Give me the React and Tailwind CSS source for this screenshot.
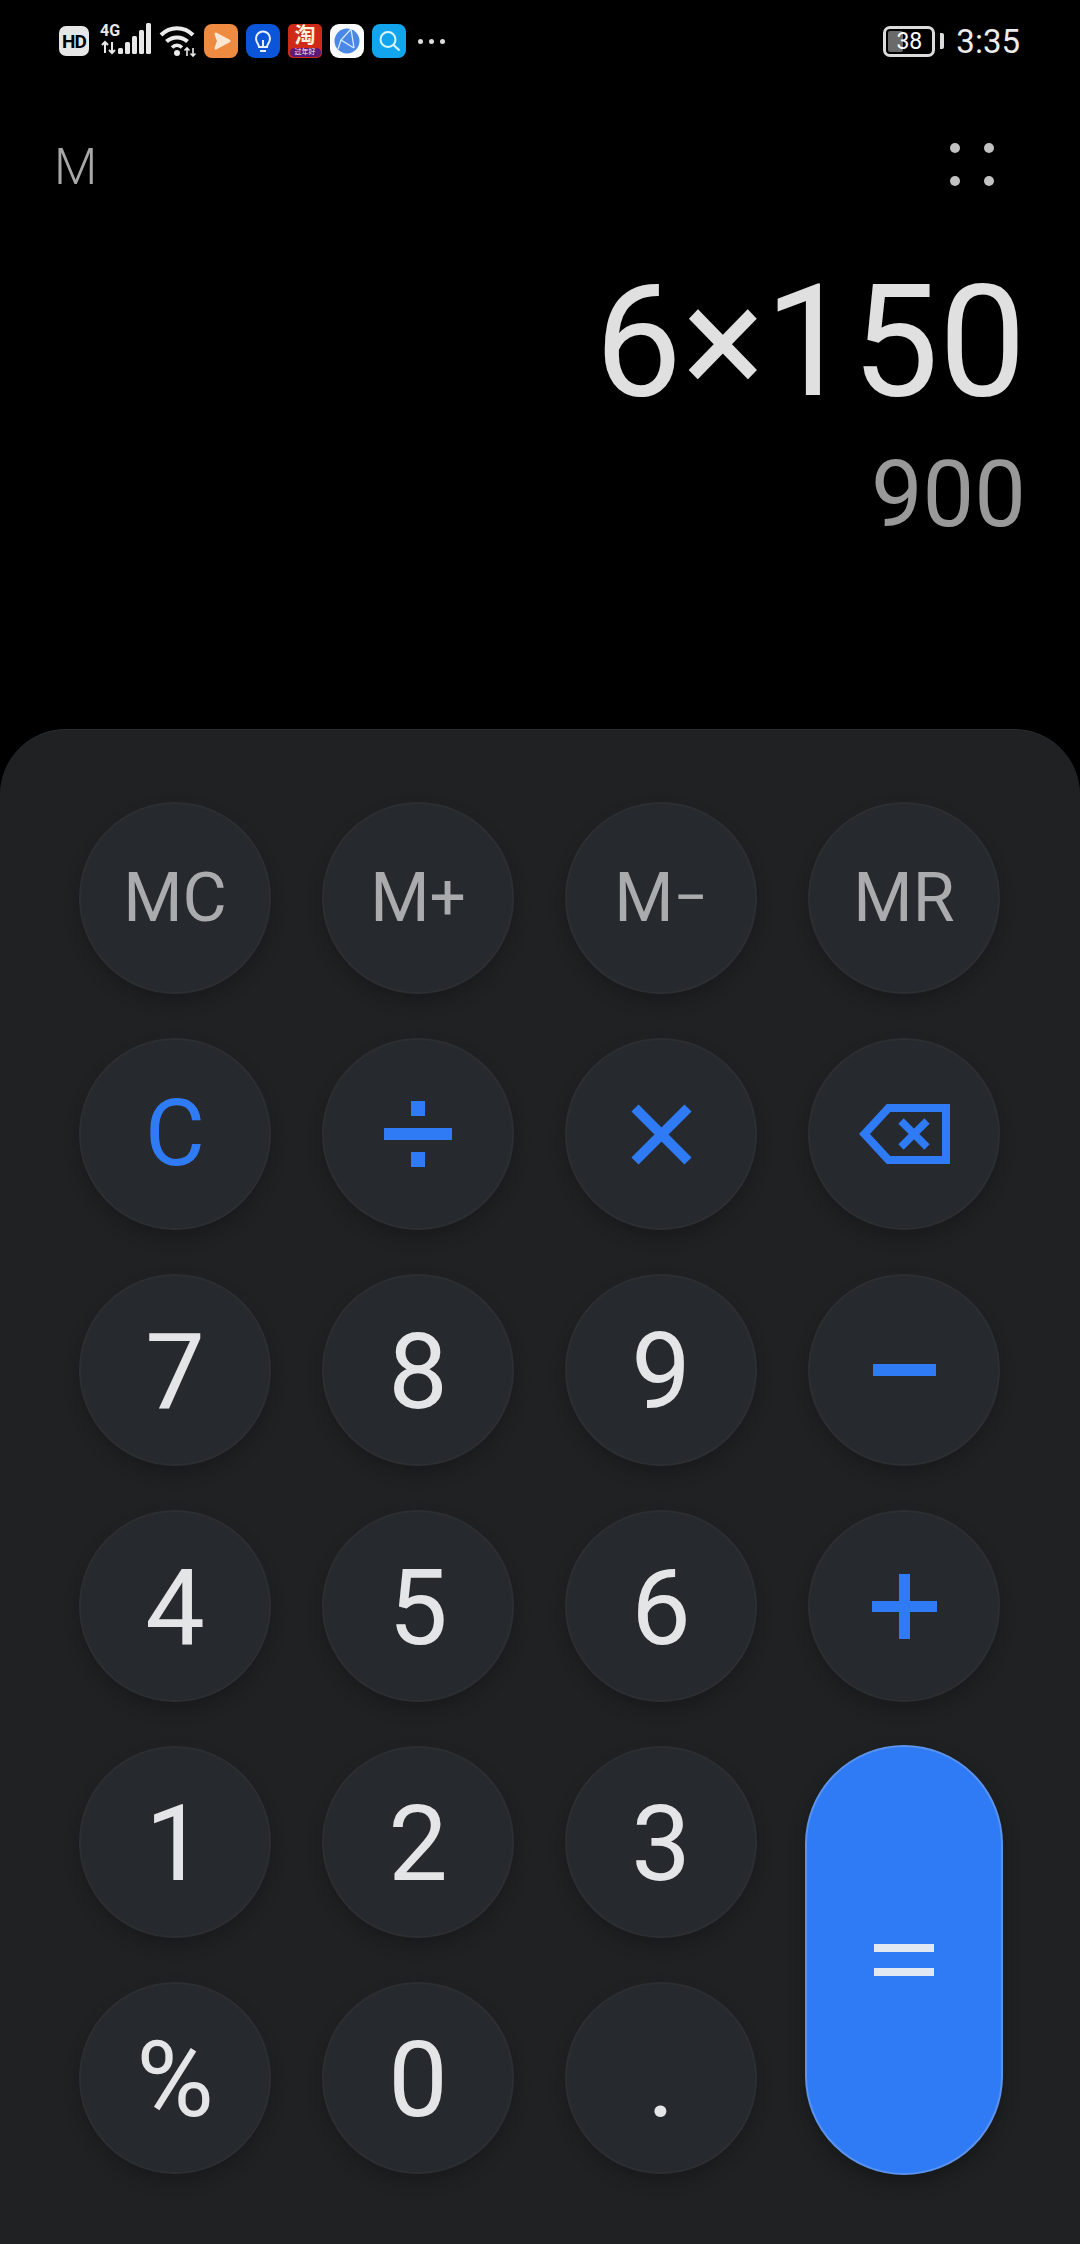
import React from 'react';

const font = { fontFamily: 'Roboto, "Noto Sans CJK SC", sans-serif' };

function HdBadge() {
  return (
    <div className="flex h-[30px] w-[30px] items-center justify-center rounded-[7px] bg-[#e6e6e6] text-[19px] font-bold leading-none tracking-[-1px] text-black">
      HD
    </div>
  );
}

function Signal() {
  return (
    <div className="-mt-[4px] ml-[11px] flex h-[34px] w-[52px] flex-col overflow-visible">
      <span className="h-[17px] w-[18px] text-[16px] font-bold leading-[17px] text-[#e8e8e8]">4G</span>
      <svg width="52" height="34" viewBox="0 0 52 34" className="-mt-[17px]">
        <path d="M5 31V20M2 23l3-3 3 3" stroke="#e8e8e8" strokeWidth="2" fill="none" />
        <path d="M12 20v11M9 28l3 3 3-3" stroke="#e8e8e8" strokeWidth="2" fill="none" />
        <rect x="18" y="26" width="5" height="6" rx="1.5" fill="#e8e8e8" />
        <rect x="25" y="20" width="5" height="12" rx="1.5" fill="#e8e8e8" />
        <rect x="32" y="14" width="5" height="18" rx="1.5" fill="#e8e8e8" />
        <rect x="39" y="8" width="5" height="24" rx="1.5" fill="#e8e8e8" />
        <rect x="46" y="1" width="5" height="31" rx="1.5" fill="#e8e8e8" />
      </svg>
    </div>
  );
}

function Wifi() {
  return (
    <svg width="38" height="34" viewBox="0 0 38 34" className="-mt-[3px] ml-[7px]">
      <path d="M2 12C11 3 25 3 34 12" stroke="#ececec" strokeWidth="4" fill="none" />
      <path d="M7.5 18.5C13 13 23 13 28.5 18.5" stroke="#ececec" strokeWidth="4" fill="none" />
      <path d="M13 24.5C16 21.5 20 21.5 23 24.5" stroke="#ececec" strokeWidth="3.5" fill="none" />
      <circle cx="18" cy="30" r="3" fill="#ececec" />
      <path d="M28 33V25M25.5 27.5L28 25l2.5 2.5" stroke="#ececec" strokeWidth="1.6" fill="none" />
      <path d="M34 25v8M31.5 30.5L34 33l2.5-2.5" stroke="#ececec" strokeWidth="1.6" fill="none" />
    </svg>
  );
}

function VideoApp() {
  return (
    <svg width="34" height="34" viewBox="0 0 34 34">
      <rect width="34" height="34" rx="8" fill="#ef8b40" />
      <path d="M12 10l13 7-13 7 2.500-7z" fill="#fbe6d2" stroke="#fbe6d2" strokeWidth="3" strokeLinejoin="round" />
    </svg>
  );
}

function BulbApp() {
  return (
    <svg width="34" height="34" viewBox="0 0 34 34">
      <rect width="34" height="34" rx="9" fill="#0b55d8" />
      <path d="M13 23c0-3-3-4.500-3-8.500a7 7 0 0114 0c0 4-3 5.500-3 8.500z" stroke="#e8f0ff" strokeWidth="2" fill="none" />
      <path d="M14 27h6M17 23v-7" stroke="#e8f0ff" strokeWidth="2" fill="none" />
    </svg>
  );
}

function TaobaoApp() {
  return (
    <div className="flex h-[34px] w-[34px] flex-col items-center overflow-hidden rounded-[5px] bg-[#cf2a18]">
      <div className="h-[23px] text-[21px] font-bold leading-[23px] text-[#fff1d8]">淘</div>
      <div className="mt-[1px] h-[9px] w-[31px] rounded-full bg-[#5c1a78] text-center text-[7px] leading-[9px] text-[#ffe8e8]">过年好</div>
    </div>
  );
}

function GlobeApp() {
  return (
    <svg width="34" height="34" viewBox="0 0 34 34">
      <rect width="34" height="34" rx="9" fill="#fbfbfd" />
      <circle cx="17" cy="17" r="12.500" fill="#4a88e6" />
      <path d="M21 5L11 16l13 8 M11 16l-3 9 M21 5l3 19" stroke="#dbe8fb" strokeWidth="1.300" fill="none" />
    </svg>
  );
}

function SearchApp() {
  return (
    <svg width="34" height="34" viewBox="0 0 34 34">
      <rect width="34" height="34" rx="8" fill="#12a5ee" />
      <circle cx="16" cy="15.500" r="7.500" stroke="#d9f6ff" strokeWidth="2" fill="none" />
      <path d="M21.500 21l6 5.500" stroke="#d9f6ff" strokeWidth="2.200" />
    </svg>
  );
}

function Battery() {
  return (
    <div className="flex items-center gap-[5px]">
      <div className="relative flex h-[31px] w-[52px] items-center justify-center overflow-hidden rounded-[7px] border-[3px] border-[#dcdcdc] text-[23px] leading-none text-white">
        <div className="absolute bottom-[2px] left-[2px] top-[2px] w-[15px] rounded-[2px] bg-[#6a6a6a]" />
        <span className="relative">38</span>
      </div>
      <div className="h-[16px] w-[4px] rounded-r-[2px] bg-[#dcdcdc]" />
    </div>
  );
}

function StatusBar() {
  return (
    <div className="flex h-[82px] items-center justify-between pl-[59px] pr-[60px]">
      <div className="flex items-center">
        <HdBadge />
        <Signal />
        <Wifi />
        <div className="ml-[7px] flex items-center gap-[8px]">
          <VideoApp />
          <BulbApp />
          <TaobaoApp />
          <GlobeApp />
          <SearchApp />
        </div>
        <div className="ml-[12px] flex gap-[6px]">
          <span className="h-[5px] w-[5px] rounded-full bg-[#dedede]" />
          <span className="h-[5px] w-[5px] rounded-full bg-[#dedede]" />
          <span className="h-[5px] w-[5px] rounded-full bg-[#dedede]" />
        </div>
      </div>
      <div className="flex items-center gap-[12px]">
        <Battery />
        <span className="text-[33px] leading-none text-[#ececec]">3:35</span>
      </div>
    </div>
  );
}

function Header() {
  return (
    <div className="flex items-start justify-between pl-[54px] pr-[86px] pt-[60px]">
      <span className="text-[50px] font-light leading-[50px] text-[#a8a8a8]">M</span>
      <div className="mt-[1px] grid grid-cols-2 gap-x-[24px] gap-y-[23px]">
        <span className="h-[10px] w-[10px] rounded-full bg-[#c2c2c2]" />
        <span className="h-[10px] w-[10px] rounded-full bg-[#c2c2c2]" />
        <span className="h-[10px] w-[10px] rounded-full bg-[#c2c2c2]" />
        <span className="h-[10px] w-[10px] rounded-full bg-[#c2c2c2]" />
      </div>
    </div>
  );
}

function Display() {
  return (
    <div className="flex flex-col items-end pr-[54px] pt-[75px]">
      <div className="text-[155px] leading-[150px] text-[#e0e0e0]">6×150</div>
      <div className="mt-[28px] text-[92px] leading-[100px] text-[#999999]">900</div>
    </div>
  );
}

function DivideIcon() {
  return (
    <svg width="68" height="66" viewBox="0 0 68 66" fill="#2f7bf6">
      <rect x="27" y="0" width="14" height="15" />
      <rect x="0" y="27" width="68" height="12" />
      <rect x="27" y="51" width="14" height="15" />
    </svg>
  );
}

function TimesIcon() {
  return (
    <svg width="61" height="61" viewBox="0 0 61 61">
      <path d="M4 4L57 57M57 4L4 57" stroke="#2f7bf6" strokeWidth="10" fill="none" />
    </svg>
  );
}

function BackspaceIcon() {
  return (
    <svg width="91" height="60" viewBox="0 0 91 60">
      <path d="M5.500 30L29.500 4H87V56H29.500Z" stroke="#2f7bf6" strokeWidth="8" fill="none" />
      <path d="M42 17L68 43M68 17L42 43" stroke="#2f7bf6" strokeWidth="7.500" fill="none" />
    </svg>
  );
}

function MinusIcon() {
  return (
    <svg width="63" height="12" viewBox="0 0 63 12">
      <rect width="63" height="12" fill="#2f7bf6" />
    </svg>
  );
}

function PlusIcon() {
  return (
    <svg width="65" height="65" viewBox="0 0 65 65" fill="#2f7bf6">
      <rect x="0" y="27" width="65" height="11" />
      <rect x="27" y="0" width="11" height="65" />
    </svg>
  );
}

function Key({ children, className = '' }) {
  return (
    <button
      type="button"
      className={`flex h-[192px] w-[192px] items-center justify-center rounded-full border-2 border-[#2c2f32] bg-[#26292d] shadow-[0_8px_16px_rgba(0,0,0,0.22)] ${className}`}
    >
      {children}
    </button>
  );
}

const memoryKeys = [
  { id: 'mc', label: 'MC' },
  { id: 'mplus', label: 'M', sign: '+', signClass: 'text-[64px] leading-none' },
  { id: 'mminus', label: 'M', sign: '−', signClass: 'text-[60px] leading-none' },
  { id: 'mr', label: 'MR' }
];

const digitRows = [
  ['7', '8', '9'],
  ['4', '5', '6'],
  ['1', '2', '3'],
  ['%', '0', '.']
];

function Keypad() {
  return (
    <div className="mt-auto h-[1515px] rounded-t-[66px] border-t border-[#2a2c2e] bg-[#1f2123] pl-[79px] pt-[72px]">
      <div className="grid w-[921px] grid-cols-[repeat(4,192px)] grid-rows-[repeat(6,192px)] gap-x-[51px] gap-y-[44px]">
        {memoryKeys.map((key) => (
          <Key key={key.id} className="text-[68px] text-[#a9abad]">
            <span>{key.label}</span>
            {key.sign && <span className={key.signClass}>{key.sign}</span>}
          </Key>
        ))}

        <Key className="text-[92px] text-[#2f7bf6]">C</Key>
        <Key><DivideIcon /></Key>
        <Key><TimesIcon /></Key>
        <Key><BackspaceIcon /></Key>

        {digitRows.flatMap((row, rowIndex) => {
          const keys = row.map((digit) => (
            <Key key={digit} className="pt-[3px] text-[106px] leading-none text-[#e4e5e6]">{digit}</Key>
          ));
          if (rowIndex === 0) keys.push(<Key key="minus"><MinusIcon /></Key>);
          if (rowIndex === 1) keys.push(<Key key="plus"><PlusIcon /></Key>);
          if (rowIndex === 2) {
            keys.push(
              <button
                key="equals"
                type="button"
                className="row-span-2 -mx-[3px] -my-[1px] flex flex-col items-center justify-center gap-[16px] rounded-full border-2 border-[#5b92ec] bg-[#2f7bf6] shadow-[0_8px_18px_rgba(0,0,0,0.3)]"
              >
                <span className="h-[8px] w-[60px] bg-[#e2e8f2]" />
                <span className="h-[8px] w-[60px] bg-[#e2e8f2]" />
              </button>
            );
          }
          return keys;
        })}
      </div>
    </div>
  );
}

export default function App() {
  return (
    <div className="flex h-[2244px] w-[1080px] flex-col overflow-hidden bg-black" style={font}>
      <StatusBar />
      <Header />
      <Display />
      <Keypad />
    </div>
  );
}
